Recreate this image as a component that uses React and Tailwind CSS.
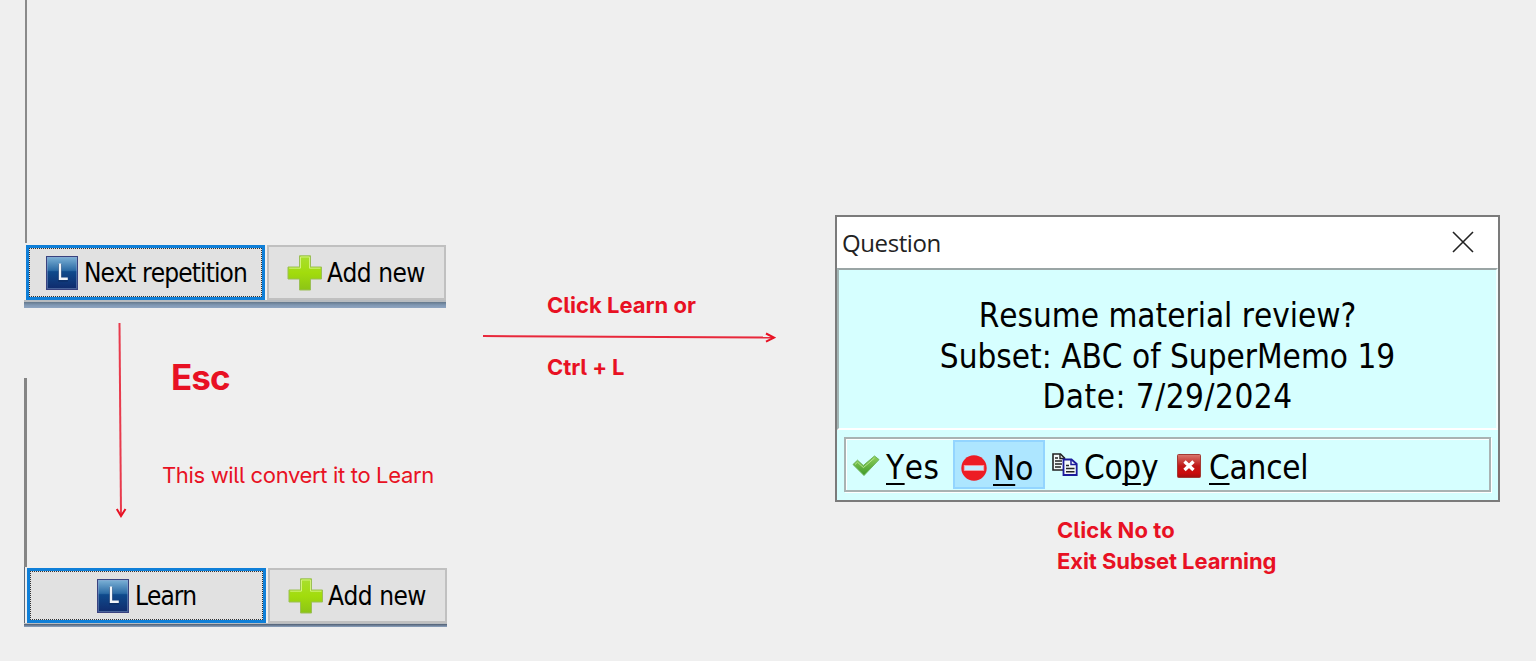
const tahoma = "font-['DejaVu_Sans_Condensed','DejaVu_Sans',sans-serif] [font-stretch:condensed] [font-kerning:none] whitespace-nowrap text-black";
const note = "font-[Inter,sans-serif] whitespace-nowrap text-[#e81123] [font-feature-settings:'cv05']";
const accel = "underline decoration-2 underline-offset-[4px] [text-decoration-skip-ink:none]";

function LearnIcon() {
  return (
    <svg width="32" height="34" viewBox="0 0 32 34" className="shrink-0">
      <defs>
        <linearGradient id="lg" x1="0" y1="0" x2="0" y2="1">
          <stop offset="0" stopColor="#7fb4d8" />
          <stop offset="0.42" stopColor="#2c6ba5" />
          <stop offset="0.46" stopColor="#0f4a8c" />
          <stop offset="1" stopColor="#102a6c" />
        </linearGradient>
      </defs>
      <rect x="0.5" y="0.5" width="31" height="33" fill="url(#lg)" stroke="#39427f" />
      <rect x="1.5" y="1.5" width="29" height="31" fill="none" stroke="#8fa6d0" strokeOpacity="0.45" />
      <path d="M14 8V23.8H22" fill="none" stroke="#0a2350" strokeWidth="4" strokeOpacity="0.4" />
      <path d="M14 7.5V22.7H21.8" fill="none" stroke="#f2f5fa" strokeWidth="2.4" />
    </svg>
  );
}

function PlusIcon() {
  return (
    <svg width="36" height="36" viewBox="0 0 36 36" className="shrink-0">
      <defs>
        <linearGradient id="pg" x1="0" y1="0" x2="0" y2="1">
          <stop offset="0" stopColor="#a9df2f" />
          <stop offset="0.5" stopColor="#a2dc0c" />
          <stop offset="1" stopColor="#8cc416" />
        </linearGradient>
      </defs>
      <path d="M12.5 0.8H23.5V12H34.5V24H23.5V35H12.5V24H1V12H12.5Z" fill="url(#pg)" stroke="#9bbf55" />
      <path d="M13.5 13V2H22.5V13.2H33.5M2.2 13.2H13.5" fill="none" stroke="#d3f27c" strokeWidth="1" />
    </svg>
  );
}

function FocusButton({ children }) {
  return (
    <div className="h-[55px] w-[239px] shrink-0 border-[3px] border-[#0f7fd8] bg-[#e1e1e1]">
      <div className="flex h-full w-full items-center border border-dotted border-[#333]">{children}</div>
    </div>
  );
}

function AddButton() {
  return (
    <div className="flex h-[55px] w-[179px] items-center border-2 border-[#c0c0c0] bg-[#e1e1e1] pl-[18px]">
      <PlusIcon />
      <span className={tahoma + " ml-[4px] text-[26px] leading-8 tracking-[-0.5px]"}>Add new</span>
    </div>
  );
}

function Dialog() {
  return (
    <section className="flex h-[287px] w-[665px] flex-col border-2 border-[#7b7b7b] bg-[#d6ffff]">
      <header className="flex h-[51px] shrink-0 items-center justify-between bg-white pl-[5px] pr-[24px]">
        <span className="font-['Open_Sans',sans-serif] text-[24px] leading-8 tracking-[-0.4px] text-[#222]">Question</span>
        <svg width="22" height="22" viewBox="0 0 22 22" className="mb-[2px]">
          <path d="M1 1L21 21M21 1L1 21" stroke="#222" strokeWidth="1.6" fill="none" />
        </svg>
      </header>
      <div className="flex h-[162px] shrink-0 flex-col items-center border-2 border-b-white border-l-[#a3b5b5] border-r-[#f2ffff] border-t-[#9aa5a5] pt-[26px]">
        <p className={tahoma + " text-[33px] leading-[40px]"}>Resume material review?</p>
        <p className={tahoma + " mt-px text-[33px] leading-[40px]"}>Subset: ABC of SuperMemo 19</p>
        <p className={tahoma + " text-[33px] leading-[40px] tracking-[0.5px]"}>Date: 7/29/2024</p>
      </div>
      <div className="ml-[7px] mt-[7px] flex h-[55px] w-[647px] items-start border-2 border-[#a9b3b3] shadow-[inset_1px_1px_0_#fff,1px_1px_0_#fff]">
        <div className="flex h-[52px] w-[107px] items-center pl-[6px]">
          <svg width="28" height="22" viewBox="0 0 28 22" className="mt-px">
            <defs>
              <linearGradient id="cg" x1="0" y1="0" x2="0" y2="1">
                <stop offset="0" stopColor="#8fd05c" />
                <stop offset="1" stopColor="#3f9a28" />
              </linearGradient>
            </defs>
            <path d="M1 9.5L5.5 5.2L11.3 10.5L22.5 1L27 4.6L12 20.5Z" fill="url(#cg)" stroke="#6db55a" strokeLinejoin="round" />
            <path d="M3 9.5L5.5 7.2L11.4 12.6L22.5 3" fill="none" stroke="#b4e58e" strokeWidth="1" />
          </svg>
          <span className={tahoma + " ml-[6px] mt-[5px] text-[33px] leading-[40px] tracking-[0.5px]"}>
            <u className={accel}>Y</u>es
          </span>
        </div>
        <div className="mt-px flex h-[49px] w-[92px] items-center border-2 border-[#93d5ff] bg-[#ade6ff] pl-[6px]">
          <svg width="26" height="26" viewBox="0 0 26 26" className="mt-[7px]">
            <circle cx="13" cy="13" r="12.7" fill="#ed1c24" />
            <rect x="3.2" y="10.5" width="19.6" height="5" fill="#c4ecff" stroke="#f6a0a8" strokeWidth="0.8" />
          </svg>
          <span className={tahoma + " ml-[6px] mt-[8px] text-[33px] leading-[40px]"}>
            <u className={accel}>N</u>o
          </span>
        </div>
        <div className="flex h-[52px] w-[125px] items-center pl-[7px]">
          <svg width="26" height="23" viewBox="0 0 26 23" className="mb-px">
            <path d="M1 1H8.5L12.5 5V17H1Z" fill="#f4f8f8" stroke="#222" strokeWidth="1.6" />
            <path d="M8 1V5.5H12.5M3 5H6M3 8H10M3 11H10M3 14H9" fill="none" stroke="#222" strokeWidth="1.4" />
            <path d="M11.5 6.5H19.5L24.7 11V22H11.5Z" fill="#f4f8f8" stroke="#1c1c9c" strokeWidth="1.8" />
            <path d="M19 7V11.5H24" fill="none" stroke="#1c1c9c" strokeWidth="1.5" />
            <path d="M14 12.5H17M14 15.5H22.5M14 18.8H22.5" fill="none" stroke="#222" strokeWidth="1.4" />
          </svg>
          <span className={tahoma + " ml-[6px] mt-[5px] text-[33px] leading-[40px] tracking-[-0.3px]"}>
            Co<u className={accel}>p</u>y
          </span>
        </div>
        <div className="flex h-[52px] items-center pl-[7px]">
          <svg width="24" height="24" viewBox="0 0 24 24" className="mt-[2px]">
            <defs>
              <linearGradient id="rg" x1="0" y1="0" x2="0" y2="1">
                <stop offset="0" stopColor="#d9796f" />
                <stop offset="0.5" stopColor="#bf1818" />
                <stop offset="0.8" stopColor="#cc0c0c" />
                <stop offset="1" stopColor="#a01010" />
              </linearGradient>
            </defs>
            <rect x="0.5" y="0.5" width="23" height="23" rx="1" fill="url(#rg)" stroke="#a33a34" />
            <path d="M7.5 7.5L16.5 16M16.5 7.5L7.5 16" stroke="#fff" strokeWidth="3.4" />
          </svg>
          <span className={tahoma + " ml-[8px] mt-[5px] text-[33px] leading-[40px] tracking-[-0.2px]"}>
            <u className={accel}>C</u>ancel
          </span>
        </div>
      </div>
    </section>
  );
}

export default function App() {
  return (
    <main className="flex h-[661px] w-[1536px] overflow-hidden bg-[#efefef]">
      <div className="w-[482px] shrink-0 pl-[24px]">
        <div className="h-[308px] w-[422px]">
          <div className="ml-px h-[243px] border-l-2 border-[#8a8a8a]" />
          <div className="flex gap-[2px] pl-[2px] pt-[2px]">
            <FocusButton>
              <div className="flex items-center pl-[16px]">
                <LearnIcon />
                <span className={tahoma + " ml-[6px] text-[26px] leading-8 tracking-[-0.87px]"}>Next repetition</span>
              </div>
            </FocusButton>
            <AddButton />
          </div>
          <div className="h-[8px] border-t-2 border-[#b8bcc0] bg-linear-to-b from-[#64788c] via-[#7f97b2] to-[#8fa5c2]" />
        </div>
        <div className="flex h-[70px]">
          <svg width="20" height="200" viewBox="0 0 20 200" className="ml-[87px] mt-[13px] shrink-0">
            <path d="M8.5 2L10 195" stroke="#e83a4c" strokeWidth="2" fill="none" />
            <path d="M5.8 188L10 195L14.5 188" stroke="#e81123" strokeWidth="2" fill="none" />
          </svg>
          <div className="ml-[31px] mt-[47px]">
            <p className={note + " ml-[9px] text-[35px] font-bold leading-[44px] tracking-[-0.9px]"}>Esc</p>
            <p className={note + " mt-[62px] text-[22px] leading-[28px] tracking-[-0.34px]"}>This will convert it to Learn</p>
          </div>
        </div>
        <div className="h-[249px] w-[423px]">
          <div className="h-[189px] border-l-[3px] border-[#858585]" />
          <div className="flex gap-[2px] border-l border-[#5f6b7a] pl-[2px] pt-px">
            <FocusButton>
              <div className="flex items-center pl-[66px]">
                <LearnIcon />
                <span className={tahoma + " ml-[6px] text-[26px] leading-8 tracking-[-1px]"}>Learn</span>
              </div>
            </FocusButton>
            <AddButton />
          </div>
          <div className="h-[4px] border-t border-[#b8bcc0] bg-linear-to-b from-[#4f5d70] to-[#8fa5c2]" />
        </div>
      </div>
      <div className="w-[353px] shrink-0 pt-[291px]">
        <p className={note + " ml-[65px] text-[22px] font-bold leading-[28px]"}>Click Learn or</p>
        <svg width="294" height="16" viewBox="0 0 294 16" className="mt-[10px]">
          <path d="M1 7L292 8.5" stroke="#e8283b" strokeWidth="2" fill="none" />
          <path d="M284 4.5L292 8.7L284 12.7" stroke="#e81123" strokeWidth="2" fill="none" />
        </svg>
        <p className={note + " ml-[65px] mt-[8px] text-[22px] font-bold leading-[28px] tracking-[-0.1px]"}>Ctrl + L</p>
      </div>
      <div className="pt-[215px]">
        <Dialog />
        <p className={note + " ml-[222px] mt-[13px] text-[22px] font-bold leading-[31px] tracking-[0.1px]"}>Click No to</p>
        <p className={note + " ml-[222px] text-[22px] font-bold leading-[31px] tracking-[-0.08px]"}>Exit Subset Learning</p>
      </div>
    </main>
  );
}
